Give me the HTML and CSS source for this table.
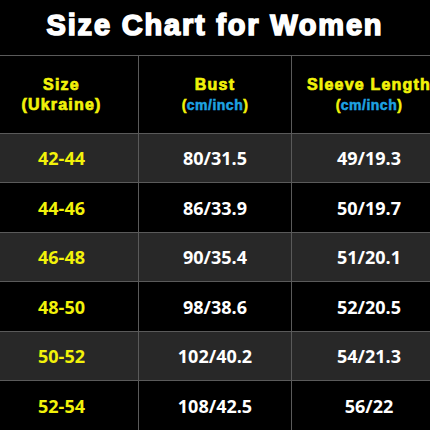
FILE: index.html
```html
<!DOCTYPE html>
<html>
<head>
<meta charset="utf-8">
<link rel="stylesheet" href="styles.css">
</head>
<body>
<div class="page">
  <h1 class="title">Size Chart for Women</h1>
  <div class="chart">
    <div class="row head">
      <div class="cell"><span class="h">Size</span><span class="h">(Ukraine)</span></div>
      <div class="cell"><span class="h">Bust</span><span class="unit">(<b>cm/inch</b>)</span></div>
      <div class="cell"><span class="h">Sleeve Length</span><span class="unit">(<b>cm/inch</b>)</span></div>
    </div>
    <div class="row grey short"><div class="cell size">42-44</div><div class="cell">80/31.5</div><div class="cell">49/19.3</div></div>
    <div class="row black tall"><div class="cell size">44-46</div><div class="cell">86/33.9</div><div class="cell">50/19.7</div></div>
    <div class="row grey short"><div class="cell size">46-48</div><div class="cell">90/35.4</div><div class="cell">51/20.1</div></div>
    <div class="row black tall"><div class="cell size">48-50</div><div class="cell">98/38.6</div><div class="cell">52/20.5</div></div>
    <div class="row grey short"><div class="cell size">50-52</div><div class="cell">102/40.2</div><div class="cell">54/21.3</div></div>
    <div class="row black tall"><div class="cell size">52-54</div><div class="cell">108/42.5</div><div class="cell">56/22</div></div>
  </div>
</div>
</body>
</html>
```
FILE: styles.css
```css
html, body {
  margin: 0;
  padding: 0;
  background: #000;
  overflow: hidden;
}
.page {
  width: 430px;
  height: 430px;
  overflow: hidden;
  background: #000;
}
.title {
  margin: 0;
  height: 55px;
  line-height: 50px;
  text-align: center;
  color: #fff;
  font-family: "Liberation Sans", Arial, sans-serif;
  font-weight: 700;
  font-size: 29px;
  letter-spacing: 1.8px;
  -webkit-text-stroke: 1.6px #fff;
}
.chart {
  margin-left: -15px;
  width: 460px;
  display: flex;
  flex-direction: column;
  gap: 1px;
  padding-top: 1px;
  background: #5a5a5a;
}
.row {
  display: grid;
  grid-template-columns: 153px 152px 154px;
  gap: 1px;
}
.head { height: 77px; }
.short { height: 48px; }
.tall { height: 49px; }
.cell {
  display: flex;
  flex-direction: column;
  align-items: center;
  justify-content: center;
  background: #000;
  color: #fff;
  font-family: "Open Sans", "Liberation Sans", sans-serif;
  font-weight: 700;
  font-size: 18px;
}
.grey .cell { background: #282828; }
.size { color: #f2f20a; }
.h, .unit {
  font-family: "Liberation Sans", Arial, sans-serif;
  font-weight: 700;
  line-height: 20px;
  color: #f2f20a;
  white-space: nowrap;
}
.h {
  font-size: 16px;
  letter-spacing: 1.2px;
  -webkit-text-stroke: 0.7px #f2f20a;
}
.unit {
  font-size: 14px;
  letter-spacing: 0.5px;
  -webkit-text-stroke: 0.5px #f2f20a;
}
.unit b {
  color: #1ea2e2;
  -webkit-text-stroke: 0.5px #1ea2e2;
}
```
